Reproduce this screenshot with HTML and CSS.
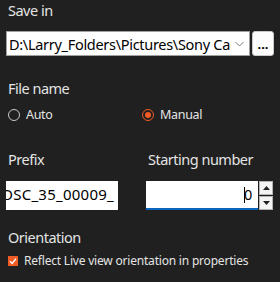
FILE: index.html
```html
<!DOCTYPE html>
<html>

<head>
    <title>Save settings</title>
    <meta charset="utf-8">
    <link rel="stylesheet" href="styles.css">
</head>

<body>
    <div class="panel">
        <div class="section save-in">
            <div class="section-title">Save in</div>
            <div class="path-row">
                <div class="combo">
                    <span class="combo-text">D:\Larry_Folders\Pictures\Sony Camera</span>
                    <svg class="chevron" width="9" height="6" viewBox="0 0 9 6">
                        <path d="M0.5 1 L4.5 5 L8.5 1" fill="none" stroke="#7a7a7a" stroke-width="1"/>
                    </svg>
                </div>
                <button class="browse-button">...</button>
            </div>
        </div>

        <div class="section file-name">
            <div class="section-title">File name</div>
            <div class="radio-row">
                <label class="radio"><span class="radio-dot"></span>Auto</label>
                <label class="radio checked"><span class="radio-dot"></span>Manual</label>
            </div>
        </div>

        <div class="field-row">
            <div class="field">
                <div class="section-title">Prefix</div>
                <div class="text-box prefix-box"><span class="prefix-text">DSC_35_00009_</span></div>
            </div>
            <div class="field">
                <div class="section-title">Starting number</div>
                <div class="number-wrap">
                    <div class="text-box number-box"><span class="caret"></span>0</div>
                    <div class="spinner">
                        <div class="spin-button">
                            <svg width="7" height="4" viewBox="0 0 7 4"><path d="M0 4 L3.5 0 L7 4 Z" fill="#222"/></svg>
                        </div>
                        <div class="spin-button">
                            <svg width="7" height="4" viewBox="0 0 7 4"><path d="M0 0 L3.5 4 L7 0 Z" fill="#222"/></svg>
                        </div>
                    </div>
                </div>
            </div>
        </div>

        <div class="section orientation">
            <div class="section-title">Orientation</div>
            <label class="check">
                <span class="check-box">
                    <svg width="10" height="10" viewBox="0 0 10 10"><path d="M2 5.2 L4.2 7.4 L8 2.6" fill="none" stroke="#fff" stroke-width="1.4"/></svg>
                </span>
                Reflect Live view orientation in properties
            </label>
        </div>
    </div>
</body>

</html>
```

FILE: styles.css
```css
body {
    margin: 0;
    background-color: #202020;
    color: #e4e4e4;
    font-family: "Noto Sans", sans-serif;
}

.panel {
    display: flex;
    flex-direction: column;
    padding: 0 6px 0 6px;
}

.section-title {
    font-size: 14.5px;
    letter-spacing: -0.5px;
    line-height: 20px;
    padding-left: 2px;
}

.path-row {
    display: flex;
    gap: 2px;
    margin-top: 11px;
    height: 25px;
}

.combo {
    flex: 1;
    display: flex;
    align-items: center;
    background-color: #fff;
    border: 1px solid #a0a0a0;
    color: #000;
    overflow: hidden;
    box-sizing: border-box;
}

.combo-text {
    flex: 1;
    white-space: nowrap;
    overflow: hidden;
    font-size: 14.5px;
    letter-spacing: -0.3px;
    padding-left: 2px;
}

.chevron {
    margin: 0 5px 0 4px;
}

.browse-button {
    width: 22px;
    height: 25px;
    padding: 0;
    background-color: #fdfdfd;
    border: 1px solid #c8c8c8;
    border-radius: 3px;
    color: #000;
    font-family: "Noto Sans", sans-serif;
    font-size: 13px;
    font-weight: bold;
    line-height: 18px;
}

.file-name {
    margin-top: 22px;
}

.radio-row {
    display: flex;
    margin-top: 8px;
}

.radio {
    display: flex;
    align-items: center;
    gap: 6px;
    width: 146px;
    padding-left: 2px;
    font-size: 12.5px;
    letter-spacing: -0.3px;
    line-height: 18px;
}

.radio-dot {
    width: 12px;
    height: 12px;
    box-sizing: border-box;
    border: 1px solid #c8c8c8;
    border-radius: 50%;
    position: relative;
}

.radio.checked .radio-dot {
    border-color: #f05a24;
}

.radio.checked .radio-dot:after {
    content: "";
    position: absolute;
    left: 2px;
    top: 2px;
    width: 6px;
    height: 6px;
    border-radius: 50%;
    background-color: #f05a24;
}

.field-row {
    display: flex;
    margin-top: 25px;
    gap: 28px;
}

.field {
    display: flex;
    flex-direction: column;
}

.text-box {
    height: 29px;
    box-sizing: border-box;
    background-color: #fff;
    color: #000;
    font-size: 14.5px;
    letter-spacing: -0.4px;
    line-height: 27px;
    white-space: nowrap;
    overflow: hidden;
    margin-top: 12px;
}

.prefix-box {
    width: 112px;
    display: flex;
    justify-content: flex-end;
    padding-right: 4px;
    font-size: 15px;
    letter-spacing: 0.25px;
}

.prefix-text {
    flex-shrink: 0;
}

.number-wrap {
    display: flex;
    gap: 1px;
}

.number-box {
    width: 112px;
    text-align: right;
    padding-right: 6px;
    border-bottom: 2px solid #0a64c0;
}

.caret {
    display: inline-block;
    width: 1px;
    height: 16px;
    background-color: #000;
    vertical-align: -3px;
    margin-right: -1px;
}

.spinner {
    display: flex;
    flex-direction: column;
    gap: 1px;
    margin-top: 12px;
}

.spin-button {
    width: 14px;
    height: 14px;
    box-sizing: border-box;
    background-color: #f4f4f4;
    border: 1px solid #b4b4b4;
    display: flex;
    align-items: center;
    justify-content: center;
}

.orientation {
    margin-top: 17px;
}

.check {
    display: flex;
    align-items: center;
    gap: 6px;
    margin-top: 5px;
    padding-left: 2px;
    font-size: 12px;
    letter-spacing: -0.2px;
    line-height: 18px;
}

.check-box {
    width: 10px;
    height: 10px;
    background-color: #f05a24;
    display: flex;
}
```
